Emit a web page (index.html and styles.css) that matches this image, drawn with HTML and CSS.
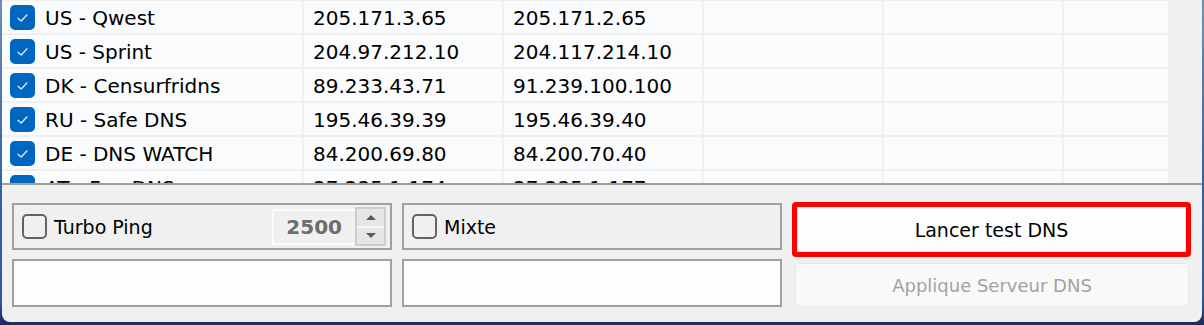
FILE: index.html
```html
<!DOCTYPE html>
<html lang="fr">
<head>
    <meta charset="UTF-8">
    <meta name="viewport" content="width=device-width, initial-scale=1.0">
    <title>Test DNS</title>
    <link rel="stylesheet" href="styles.css">
</head>
<body>
    <div class="window">
        <div class="list">
            <div class="grid">
                <div class="cell name"><span class="check on"><svg viewBox="0 0 24 24"><polyline points="6.5,12.5 10.5,16 17.5,8.5" /></svg></span>US - Qwest</div>
                <div class="cell">205.171.3.65</div>
                <div class="cell">205.171.2.65</div>
                <div class="cell"></div><div class="cell"></div><div class="cell"></div>

                <div class="cell name"><span class="check on"><svg viewBox="0 0 24 24"><polyline points="6.5,12.5 10.5,16 17.5,8.5" /></svg></span>US - Sprint</div>
                <div class="cell">204.97.212.10</div>
                <div class="cell">204.117.214.10</div>
                <div class="cell"></div><div class="cell"></div><div class="cell"></div>

                <div class="cell name"><span class="check on"><svg viewBox="0 0 24 24"><polyline points="6.5,12.5 10.5,16 17.5,8.5" /></svg></span>DK - Censurfridns</div>
                <div class="cell">89.233.43.71</div>
                <div class="cell">91.239.100.100</div>
                <div class="cell"></div><div class="cell"></div><div class="cell"></div>

                <div class="cell name"><span class="check on"><svg viewBox="0 0 24 24"><polyline points="6.5,12.5 10.5,16 17.5,8.5" /></svg></span>RU - Safe DNS</div>
                <div class="cell">195.46.39.39</div>
                <div class="cell">195.46.39.40</div>
                <div class="cell"></div><div class="cell"></div><div class="cell"></div>

                <div class="cell name"><span class="check on"><svg viewBox="0 0 24 24"><polyline points="6.5,12.5 10.5,16 17.5,8.5" /></svg></span>DE - DNS WATCH</div>
                <div class="cell">84.200.69.80</div>
                <div class="cell">84.200.70.40</div>
                <div class="cell"></div><div class="cell"></div><div class="cell"></div>

                <div class="cell name"><span class="check on"><svg viewBox="0 0 24 24"><polyline points="6.5,12.5 10.5,16 17.5,8.5" /></svg></span>AT - FreeDNS</div>
                <div class="cell">37.235.1.174</div>
                <div class="cell">37.235.1.177</div>
                <div class="cell"></div><div class="cell"></div><div class="cell"></div>
            </div>
        </div>

        <div class="panel">
            <div class="group">
                <span class="check"></span>
                <span class="label">Turbo Ping</span>
                <div class="spin">
                    <div class="spin-value">2500</div>
                    <div class="spin-buttons">
                        <div class="spin-btn"><span class="arrow up"></span></div>
                        <div class="spin-btn"><span class="arrow down"></span></div>
                    </div>
                </div>
            </div>
            <div class="group">
                <span class="check"></span>
                <span class="label">Mixte</span>
            </div>
            <div class="btn-cell">
                <button class="btn primary">Lancer test DNS</button>
            </div>

            <div class="textbox"></div>
            <div class="textbox"></div>
            <div class="btn-cell">
                <button class="btn disabled" disabled>Applique Serveur DNS</button>
            </div>
        </div>
    </div>
</body>
</html>
```

FILE: styles.css
```css
html, body {
    margin: 0;
    padding: 0;
}
body {
    width: 1204px;
    height: 325px;
    overflow: hidden;
    background: linear-gradient(#6f8fb0 0, #3463ab 180px, #2c58a0 300px, #1d2f62 322px);
    font-family: "DejaVu Sans", Verdana, sans-serif;
    color: #000;
}
.window {
    margin-left: 2px;
    width: 1200px;
    height: 322px;
    background-color: #f0f0f0;
    border-radius: 0 0 8px 8px;
    overflow: hidden;
}
.list {
    height: 183px;
    overflow: hidden;
    border-bottom: 2px solid #a0a0a0;
    background-color: #f0f0f0;
}
.grid {
    display: grid;
    grid-template-columns: 300px 198px 198px 178px 178px 104px;
    grid-auto-rows: 32px;
    gap: 2px;
    padding-top: 1px;
    width: 1166px;
    background-color: #f0f0f0;
    font-size: 20px;
}
.cell {
    box-sizing: border-box;
    background-color: #f9fbfd;
    display: flex;
    align-items: center;
    padding: 2px 0 0 9px;
    white-space: nowrap;
}
.cell.name {
    padding-left: 8px;
}
.check {
    box-sizing: border-box;
    width: 25px;
    height: 25px;
    border: 2px solid #646464;
    border-radius: 5px;
    flex: none;
}
.check.on {
    background-color: #0067c0;
    border-color: #0067c0;
    margin-right: 10px;
    margin-top: -1px;
}
.check svg {
    display: block;
    width: 21px;
    height: 21px;
    fill: none;
    stroke: #d8e6f5;
    stroke-width: 1.6;
}

.panel {
    display: grid;
    grid-template-columns: 380px 380px 399px;
    grid-template-rows: 47px 48px;
    column-gap: 10px;
    row-gap: 9px;
    padding: 18px 0 0 10px;
    font-size: 19px;
}
.group {
    box-sizing: border-box;
    border: 2px solid #a0a0a0;
    display: flex;
    align-items: center;
    padding-left: 8px;
}
.group .label {
    margin-left: 7px;
}
.spin {
    margin-left: auto;
    margin-right: 4px;
    display: flex;
    height: 39px;
    align-items: center;
}
.spin-value {
    box-sizing: border-box;
    width: 83px;
    height: 36px;
    border: 2px solid #fbfbfb;
    border-right: none;
    color: #6d6d6d;
    font-weight: bold;
    font-size: 20px;
    text-align: right;
    padding-right: 13px;
    line-height: 32px;
}
.spin-buttons {
    box-sizing: border-box;
    width: 31px;
    height: 39px;
    border: 2px solid #cdcdcd;
    background-color: #e6e6e6;
    display: flex;
    flex-direction: column;
}
.spin-btn {
    flex: 1;
    display: flex;
    align-items: center;
    justify-content: center;
}
.spin-btn + .spin-btn {
    border-top: 2px solid #f4f4f4;
}
.arrow {
    width: 0;
    height: 0;
    border-left: 5px solid transparent;
    border-right: 5px solid transparent;
}
.arrow.up {
    border-bottom: 5px solid #5a5a5a;
}
.arrow.down {
    border-top: 5px solid #5a5a5a;
}
.textbox {
    box-sizing: border-box;
    border: 2px solid #a0a0a0;
    background-color: #fdfdfd;
}
.btn-cell {
    position: relative;
}
.btn {
    display: block;
    box-sizing: border-box;
    font-family: inherit;
    font-size: 19px;
    cursor: pointer;
}
.btn.primary {
    width: 399px;
    height: 55px;
    margin-top: -1px;
    background-color: #fdfdfd;
    border: 5px solid #ff0000;
    border-radius: 4px;
    box-shadow: inset 0 0 0 1px #e4ebf3;
    color: #000;
}
.btn.disabled {
    width: 394px;
    height: 44px;
    margin: 4px 0 0 3px;
    background-color: #f9f9f9;
    border: 1px solid #e8e8e8;
    border-radius: 5px;
    color: #a2a2a2;
    font-size: 18px;
    cursor: default;
}
```
